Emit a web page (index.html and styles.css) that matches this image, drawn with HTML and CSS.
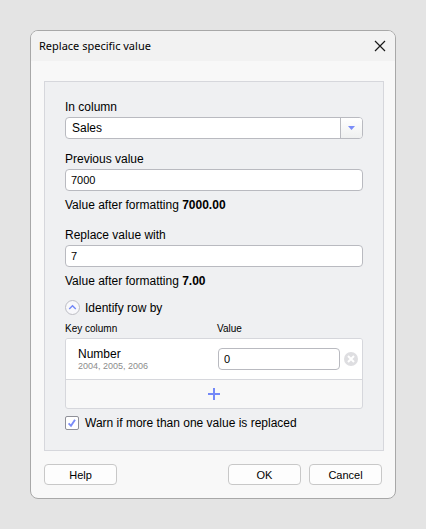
FILE: index.html
```html
<!DOCTYPE html>
<html lang="en">
<head>
  <meta charset="UTF-8" />
  <meta name="viewport" content="width=device-width, initial-scale=1.0"/>
  <title>Replace specific value</title>
  <link rel="stylesheet" href="styles.css">
</head>
<body>
  <form class="dialog" onsubmit="return false">
    <header class="title-bar">
      <h1>Replace specific value</h1>
      <button type="button" class="close-btn" aria-label="Close">
        <svg width="12" height="12" viewBox="0 0 12 12"><path d="M1 1L11 11M11 1L1 11" fill="none" stroke="#1a1a1a" stroke-width="1.2"/></svg>
      </button>
    </header>

    <div class="content">
      <div class="panel">
        <div class="field">
          <label for="column">In column</label>
          <div class="select-box">
            <select id="column">
              <option>Sales</option>
            </select>
            <span class="arrow">
              <svg width="7" height="4" viewBox="0 0 7 4"><path d="M0 0H7L3.5 4Z" fill="#7a8cf8"/></svg>
            </span>
          </div>
        </div>

        <div class="field">
          <label for="previous">Previous value</label>
          <input type="text" id="previous" value="7000" />
          <p class="formatted">Value after formatting <b>7000.00</b></p>
        </div>

        <div class="field after-hint">
          <label for="replacement">Replace value with</label>
          <input type="text" id="replacement" value="7" />
          <p class="formatted">Value after formatting <b>7.00</b></p>
        </div>

        <button type="button" class="toggle" aria-expanded="true">
          <svg width="15" height="15" viewBox="0 0 15 15"><circle cx="7.5" cy="7.5" r="7" fill="#f8f8fb" stroke="#bcbdc4"/><path d="M4.2 9L7.5 5.7L10.8 9" fill="none" stroke="#7388f8" stroke-width="1.4"/></svg>
          Identify row by
        </button>

        <!-- Key columns -->
        <div class="key-head">
          <span>Key column</span>
          <label for="key-value">Value</label>
        </div>
        <div class="key-list">
          <div class="key-row">
            <div class="key-name">
              Number
              <small>2004, 2005, 2006</small>
            </div>
            <div class="key-value">
              <input type="text" id="key-value" value="0" />
              <button type="button" class="remove-btn" aria-label="Remove">
                <svg width="14" height="14" viewBox="0 0 14 14"><circle cx="7" cy="7" r="7" fill="#dedee1"/><path d="M4 4L10 10M10 4L4 10" fill="none" stroke="#fff" stroke-width="2"/></svg>
              </button>
            </div>
          </div>
          <button type="button" class="add-btn" aria-label="Add key column">
            <svg width="12" height="12" viewBox="0 0 12 12"><path d="M6 0V12M0 6H12" fill="none" stroke="#7388f8" stroke-width="2"/></svg>
          </button>
        </div>

        <div class="warn">
          <span class="check-box">
            <input type="checkbox" id="warn" checked />
            <svg class="tick" width="14" height="14" viewBox="0 0 14 14"><path d="M3.6 7.4L6 9.8L10 3.8" fill="none" stroke="#7a8cf8" stroke-width="1.9"/></svg>
          </span>
          <label for="warn">Warn if more than one value is replaced</label>
        </div>
      </div>

      <footer class="actions">
        <button type="button" class="btn help">Help</button>
        <button type="submit" class="btn">OK</button>
        <button type="button" class="btn">Cancel</button>
      </footer>
    </div>
  </form>
</body>
</html>
```

FILE: styles.css
```css
* {
  box-sizing: border-box;
}

body {
  margin: 0;
  padding: 30px;
  background: #e4e4e4;
  color: #000;
  font: 12px/14px "Liberation Sans", Arial, sans-serif;
}

input, select, button {
  margin: 0;
  font: inherit;
  color: inherit;
}

button {
  padding: 0;
  border: none;
  background: none;
  cursor: pointer;
}

svg {
  display: block;
}

.dialog {
  border: 1px solid #a8a8a8;
  border-radius: 8px;
  background: #f8f8f8;
  overflow: hidden;
}

.title-bar {
  display: flex;
  justify-content: space-between;
  align-items: center;
  height: 30px;
  padding: 0 9px 0 8px;
  background: #f2f2f2;
}

.title-bar h1 {
  margin: 0;
  font: 11px/16px "Noto Sans", sans-serif;
}

.content {
  padding: 20px 11px 13px 13px;
}

.panel {
  padding: 18px 20px 20px;
  border: 1px solid #d6d7dc;
  background: #eff0f2;
}

/* Fields */
.field {
  margin-bottom: 13px;
}

.field.after-hint {
  margin: 16px 0 12px;
}

.field label {
  display: block;
  margin-bottom: 3px;
}

input[type="text"], .select-box {
  display: block;
  width: 100%;
  height: 22px;
  padding: 0 5px;
  border: 1px solid #b9bac0;
  border-radius: 4px;
  background: #fff;
  outline: none;
}

input[type="text"] {
  font-size: 11px;
}

.select-box {
  display: grid;
  grid-template-columns: 1fr 22px;
  padding: 0;
  overflow: hidden;
}

.select-box select {
  grid-area: 1 / 1 / 2 / 3;
  appearance: none;
  padding: 0 6px;
  border: none;
  background: none;
  outline: none;
}

.arrow {
  grid-area: 1 / 2;
  display: flex;
  align-items: center;
  justify-content: center;
  border-left: 1px solid #b9bac0;
  background: linear-gradient(#fff, #eff0f0);
  pointer-events: none;
}

.formatted {
  margin: 7px 0 0;
}

.toggle {
  display: flex;
  align-items: center;
  gap: 5px;
}

/* Key columns */
.key-head, .key-row {
  display: grid;
  grid-template-columns: 152px 1fr;
}

.key-head {
  margin: 8px 0 3px;
  font-size: 10px;
  line-height: 12px;
}

.key-list {
  border: 1px solid #d6d7dc;
  border-radius: 3px;
  background: #f8f8f8;
  overflow: hidden;
}

.key-row {
  align-items: center;
  height: 41px;
  border-bottom: 1px solid #d6d7dc;
  background: #fff;
}

.key-name {
  padding-left: 12px;
}

.key-name small {
  display: block;
  font-size: 9px;
  line-height: 10px;
  color: #8c8c8c;
}

.key-value {
  display: flex;
  align-items: center;
  gap: 4px;
  padding-right: 4px;
}

.add-btn {
  display: flex;
  align-items: center;
  justify-content: center;
  width: 100%;
  height: 28px;
}

.warn {
  display: flex;
  align-items: center;
  gap: 6px;
  margin-top: 7px;
}

.check-box {
  display: grid;
}

.check-box input, .tick {
  grid-area: 1 / 1;
}

.check-box input {
  appearance: none;
  width: 14px;
  height: 14px;
  border: 1px solid #8f9098;
  border-radius: 2px;
  background: #fff;
}

.tick {
  pointer-events: none;
}

.check-box input:not(:checked) + .tick {
  display: none;
}

/* Buttons */
.actions {
  display: flex;
  gap: 8px;
  margin-top: 13px;
  padding-right: 2px;
}

.btn {
  width: 73px;
  height: 21px;
  border: 1px solid #c8c8c8;
  border-radius: 4px;
  background: #fdfdfd;
  font-size: 11px;
}

.btn:hover {
  background: #f2f2f2;
}

.help {
  margin-right: auto;
}
```
